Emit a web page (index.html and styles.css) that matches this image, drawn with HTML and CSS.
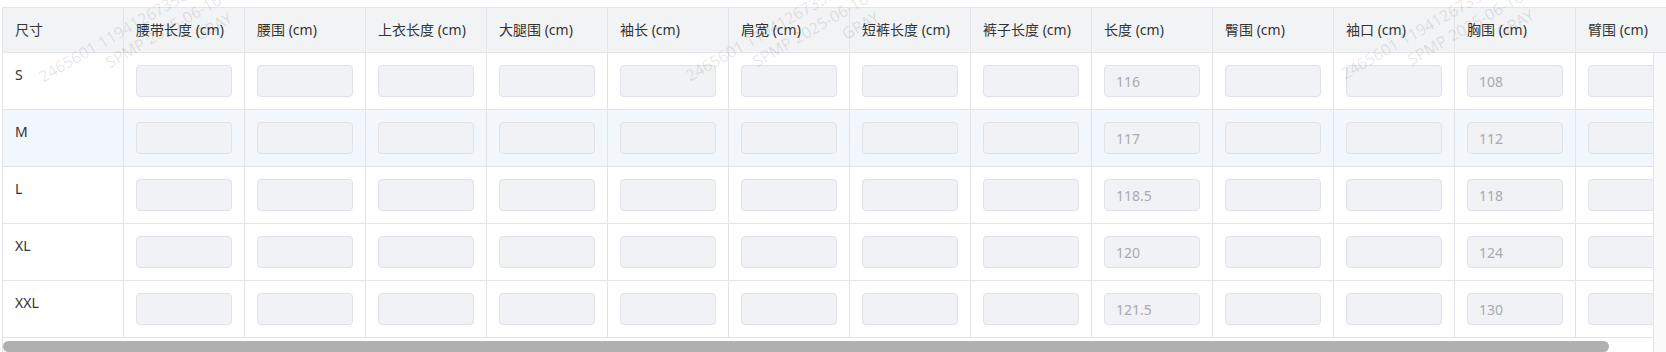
FILE: index.html
```html
<!DOCTYPE html>
<html lang="zh-CN">
<head>
<meta charset="utf-8">
<title>尺码表</title>
<link rel="stylesheet" href="styles.css">
</head>
<body>
<div class="page">
  <div class="table">
    <div class="thead">
      <div class="th">尺寸</div>
      <div class="th">腰带长度 (cm)</div>
      <div class="th">腰围 (cm)</div>
      <div class="th">上衣长度 (cm)</div>
      <div class="th">大腿围 (cm)</div>
      <div class="th">袖长 (cm)</div>
      <div class="th">肩宽 (cm)</div>
      <div class="th">短裤长度 (cm)</div>
      <div class="th">裤子长度 (cm)</div>
      <div class="th">长度 (cm)</div>
      <div class="th">臀围 (cm)</div>
      <div class="th">袖口 (cm)</div>
      <div class="th">胸围 (cm)</div>
      <div class="th">臂围 (cm)</div>
    </div>
    <div class="body">
      <div class="main">
        <div class="rows">
          <div class="tr">
            <div class="td label">S</div>
            <div class="td"><input class="inp" disabled value=""></div>
            <div class="td"><input class="inp" disabled value=""></div>
            <div class="td"><input class="inp" disabled value=""></div>
            <div class="td"><input class="inp" disabled value=""></div>
            <div class="td"><input class="inp" disabled value=""></div>
            <div class="td"><input class="inp" disabled value=""></div>
            <div class="td"><input class="inp" disabled value=""></div>
            <div class="td"><input class="inp" disabled value=""></div>
            <div class="td"><input class="inp" disabled value="116"></div>
            <div class="td"><input class="inp" disabled value=""></div>
            <div class="td"><input class="inp" disabled value=""></div>
            <div class="td"><input class="inp" disabled value="108"></div>
            <div class="td"><input class="inp" disabled value=""></div>
          </div>
          <div class="tr hover">
            <div class="td label">M</div>
            <div class="td"><input class="inp" disabled value=""></div>
            <div class="td"><input class="inp" disabled value=""></div>
            <div class="td"><input class="inp" disabled value=""></div>
            <div class="td"><input class="inp" disabled value=""></div>
            <div class="td"><input class="inp" disabled value=""></div>
            <div class="td"><input class="inp" disabled value=""></div>
            <div class="td"><input class="inp" disabled value=""></div>
            <div class="td"><input class="inp" disabled value=""></div>
            <div class="td"><input class="inp" disabled value="117"></div>
            <div class="td"><input class="inp" disabled value=""></div>
            <div class="td"><input class="inp" disabled value=""></div>
            <div class="td"><input class="inp" disabled value="112"></div>
            <div class="td"><input class="inp" disabled value=""></div>
          </div>
          <div class="tr">
            <div class="td label">L</div>
            <div class="td"><input class="inp" disabled value=""></div>
            <div class="td"><input class="inp" disabled value=""></div>
            <div class="td"><input class="inp" disabled value=""></div>
            <div class="td"><input class="inp" disabled value=""></div>
            <div class="td"><input class="inp" disabled value=""></div>
            <div class="td"><input class="inp" disabled value=""></div>
            <div class="td"><input class="inp" disabled value=""></div>
            <div class="td"><input class="inp" disabled value=""></div>
            <div class="td"><input class="inp" disabled value="118.5"></div>
            <div class="td"><input class="inp" disabled value=""></div>
            <div class="td"><input class="inp" disabled value=""></div>
            <div class="td"><input class="inp" disabled value="118"></div>
            <div class="td"><input class="inp" disabled value=""></div>
          </div>
          <div class="tr">
            <div class="td label">XL</div>
            <div class="td"><input class="inp" disabled value=""></div>
            <div class="td"><input class="inp" disabled value=""></div>
            <div class="td"><input class="inp" disabled value=""></div>
            <div class="td"><input class="inp" disabled value=""></div>
            <div class="td"><input class="inp" disabled value=""></div>
            <div class="td"><input class="inp" disabled value=""></div>
            <div class="td"><input class="inp" disabled value=""></div>
            <div class="td"><input class="inp" disabled value=""></div>
            <div class="td"><input class="inp" disabled value="120"></div>
            <div class="td"><input class="inp" disabled value=""></div>
            <div class="td"><input class="inp" disabled value=""></div>
            <div class="td"><input class="inp" disabled value="124"></div>
            <div class="td"><input class="inp" disabled value=""></div>
          </div>
          <div class="tr">
            <div class="td label">XXL</div>
            <div class="td"><input class="inp" disabled value=""></div>
            <div class="td"><input class="inp" disabled value=""></div>
            <div class="td"><input class="inp" disabled value=""></div>
            <div class="td"><input class="inp" disabled value=""></div>
            <div class="td"><input class="inp" disabled value=""></div>
            <div class="td"><input class="inp" disabled value=""></div>
            <div class="td"><input class="inp" disabled value=""></div>
            <div class="td"><input class="inp" disabled value=""></div>
            <div class="td"><input class="inp" disabled value="121.5"></div>
            <div class="td"><input class="inp" disabled value=""></div>
            <div class="td"><input class="inp" disabled value=""></div>
            <div class="td"><input class="inp" disabled value="130"></div>
            <div class="td"><input class="inp" disabled value=""></div>
          </div>
        </div>
        <div class="hscroll"><div class="thumb"></div></div>
      </div>
      <div class="gutter"></div>
    </div>
  </div>
  <svg class="watermark" width="1666" height="352" viewBox="0 0 1666 352" aria-hidden="true">
    <g transform="translate(43 83) rotate(-30)">
      <text x="0" y="0">2465601 11941267350</text>
      <text x="65" y="21">SPMP 2025-06-16 10:21</text>
      <text x="156" y="42">GRAY</text>
    </g>
    <g transform="translate(690 82) rotate(-30)">
      <text x="0" y="0">2465601 11941267350</text>
      <text x="65" y="21">SPMP 2025-06-16 10:21</text>
      <text x="156" y="42">GRAY</text>
    </g>
    <g transform="translate(1345 80) rotate(-30)">
      <text x="0" y="0">2465601 11941267350</text>
      <text x="65" y="21">SPMP 2025-06-16 10:21</text>
      <text x="156" y="42">GRAY</text>
    </g>
  </svg>
</div>
</body>
</html>
```
FILE: styles.css
```css
* {
  box-sizing: border-box;
}

body {
  margin: 0;
  background: #ffffff;
  font-family: "Noto Sans", "Noto Sans CJK SC", sans-serif;
  font-size: 14px;
  color: #303133;
}

.page {
  position: relative;
  width: 1666px;
  height: 352px;
  overflow: hidden;
  padding: 7px 0 0 2px;
}

.table {
  width: 1664px;
  border-left: 1px solid #e2e4e9;
  border-top: 1px solid #e2e4e9;
  overflow: hidden;
}

.thead {
  display: flex;
  width: max-content;
  background: #f2f3f5;
  border-bottom: 1px solid #e2e4e9;
}

.th {
  flex: 0 0 121px;
  height: 44px;
  padding: 0 12px 2px;
  display: flex;
  align-items: center;
  border-right: 1px solid #e2e4e9;
  white-space: nowrap;
  color: #333333;
}

.body {
  display: flex;
}

.main {
  flex: 0 0 1650px;
  overflow: hidden;
}

.rows {
  width: max-content;
}

.tr {
  display: flex;
  border-bottom: 1px solid #e2e4e9;
  background: #ffffff;
}

.tr.hover {
  background: #f2f7fe;
}

.td {
  flex: 0 0 121px;
  height: 56px;
  padding: 12px;
  border-right: 1px solid #e2e4e9;
}

.td.label {
  padding-top: 10px;
  line-height: 23px;
  color: #333333;
}

.inp {
  display: block;
  width: 96px;
  height: 32px;
  margin: 0;
  padding: 0 11px;
  border: 1px solid #e0e2e7;
  border-radius: 4px;
  background: #f0f2f5;
  font-family: "Noto Sans", "Noto Sans CJK SC", sans-serif;
  font-size: 14px;
  color: #a8abb2;
  -webkit-text-fill-color: #a8abb2;
  outline: none;
}

.hscroll {
  height: 15px;
  padding-top: 3px;
}

.thumb {
  width: 1606px;
  height: 11px;
  border-radius: 6px;
  background: #b0b0b0;
}

.gutter {
  flex: 1;
  background: #fafafa;
  border-left: 1px solid #e2e4e9;
}

.watermark {
  position: absolute;
  top: 0;
  left: 0;
  pointer-events: none;
  font-family: "Noto Sans", sans-serif;
  font-size: 16px;
  fill: rgba(0, 0, 0, 0.1);
}
```
